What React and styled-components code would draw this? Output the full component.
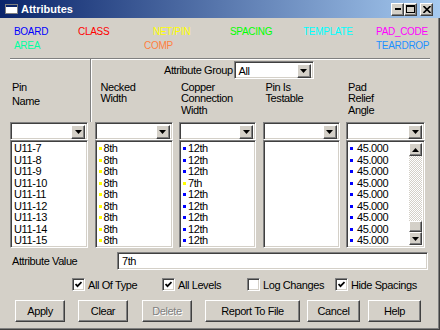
import React from 'react';
import styled, { createGlobalStyle, css } from 'styled-components';

const GlobalStyle = createGlobalStyle`
  html, body {
    margin: 0;
    padding: 0;
    background: #d4d0c8;
  }
  body {
    font-family: "Liberation Sans", Arial, sans-serif;
    font-size: 11px;
    letter-spacing: -0.4px;
    color: #000;
  }
  #root {
    width: 440px;
    height: 330px;
  }
`;

const sunken = css`
  box-sizing: border-box;
  border: 1px solid;
  border-color: #808080 #ffffff #ffffff #808080;
  box-shadow: inset 1px 1px 0 #404040, inset -1px -1px 0 #d4d0c8;
`;

const raised = css`
  box-sizing: border-box;
  border: 1px solid;
  border-color: #ffffff #404040 #404040 #ffffff;
  box-shadow: inset -1px -1px 0 #808080, inset 1px 1px 0 #d4d0c8;
  background: #d4d0c8;
`;

const Window = styled.div`
  width: 440px;
  height: 330px;
  box-sizing: border-box;
  background: #d4d0c8;
  display: flex;
  flex-direction: column;
  overflow: hidden;
  box-shadow: inset -1px -1px 0 #404040, inset -2px -2px 0 #808080;
`;

const TitleBar = styled.div`
  height: 18px;
  flex: none;
  display: flex;
  align-items: center;
  padding: 0 7px 0 5px;
  background: linear-gradient(to right, #0a246a, #a6caf0);
`;

const Title = styled.span`
  color: #fff;
  font-weight: bold;
  font-size: 11px;
  letter-spacing: 0;
  margin-left: 3px;
  flex: 1;
`;

const CapButton = styled.div`
  ${raised};
  width: 13px;
  height: 13px;
  display: flex;
  align-items: center;
  justify-content: center;
  margin-left: ${(p) => p.$ml || 0}px;
`;

const Body = styled.div`
  flex: 1;
  display: flex;
  flex-direction: column;
  padding: 0 10px;
`;

const Legend = styled.div`
  margin-top: 7px;
  padding-left: 4px;
  display: grid;
  grid-template-columns: 64px 75px 77px 73px 73px 1fr;
  grid-auto-rows: 14px;
  font-size: 10px;
  letter-spacing: -0.3px;
  line-height: 14px;
`;

const LegendItem = styled.span`
  color: ${(p) => p.$color};
  grid-column: ${(p) => p.$col || 'auto'};
  padding-left: ${(p) => p.$indent || 0}px;
  white-space: nowrap;
`;

const TopSection = styled.div`
  margin-top: 5px;
  height: 64px;
  box-sizing: border-box;
  display: flex;
  border-top: 1px solid #808080;
  box-shadow: inset 0 1px 0 #ffffff;
`;

const PinPane = styled.div`
  width: 81px;
  box-sizing: border-box;
  border-right: 1px solid #808080;
  padding: 21px 0 0 2px;
`;

const RightPane = styled.div`
  flex: 1;
  border-left: 1px solid #ffffff;
  display: flex;
  flex-direction: column;
`;

const HeaderText = styled.div`
  line-height: ${(p) => p.$lh || 11.5}px;
  padding-left: ${(p) => p.$pl || 0}px;
  white-space: nowrap;
`;

const GroupRow = styled.div`
  margin-top: 2px;
  height: 18px;
  padding-left: 72px;
  display: flex;
  align-items: center;
  gap: 1px;
`;

const HeaderGrid = styled.div`
  margin-top: 2.5px;
  padding-left: 2.5px;
  display: grid;
  grid-template-columns: 78px 77px 77px 79px;
  column-gap: 6.5px;
`;

const Grid = styled.div`
  display: grid;
  grid-template-columns: 78px 78px 77px 77px 79px;
  grid-template-rows: 18px 108px;
  column-gap: 6.5px;
`;

const ComboBox = styled.div`
  ${sunken};
  width: ${(p) => (p.$w ? `${p.$w}px` : 'auto')};
  height: 18px;
  background: #fff;
  display: flex;
  padding: 2px;
`;

const ComboText = styled.div`
  flex: 1;
  line-height: 14px;
  padding-left: 2px;
`;

const DropButton = styled.div`
  ${raised};
  width: 14px;
  height: 14px;
  display: flex;
  align-items: center;
  justify-content: center;
`;

const ListBox = styled.div`
  ${sunken};
  background: #fff;
  padding: 2px;
  display: flex;
  overflow: hidden;
`;

const Items = styled.div`
  flex: 1;
  overflow: hidden;
`;

const Item = styled.div`
  height: 11.5px;
  line-height: 11.5px;
  padding-left: 1px;
  display: flex;
  align-items: center;
  gap: ${(p) => p.$gap || 2}px;
  white-space: nowrap;
`;

const Bullet = styled.span`
  width: 3px;
  height: 3px;
  flex: none;
  background: ${(p) => p.$color};
`;

const ScrollBar = styled.div`
  width: 13px;
  flex: none;
  display: flex;
  flex-direction: column;
  background: repeating-conic-gradient(#d4d0c8 0 25%, #ffffff 0 50%) 0 0 / 2px 2px;
`;

const Track = styled.div`
  flex: 1;
`;

const ScrollButton = styled.div`
  ${raised};
  width: 13px;
  height: 13px;
  display: flex;
  align-items: center;
  justify-content: center;
`;

const Thumb = styled.div`
  ${raised};
  width: 13px;
  height: 11px;
`;

const ValueRow = styled.div`
  margin-top: 4px;
  padding-left: 2px;
  display: grid;
  grid-template-columns: 105px 311px;
  align-items: center;
`;

const TextField = styled.div`
  ${sunken};
  height: 18px;
  background: #fff;
  padding: 0 4px;
  line-height: 16px;
`;

const CheckRow = styled.div`
  margin-top: 8px;
  padding-left: 62px;
  display: flex;
  height: 13px;
`;

const CheckItem = styled.label`
  width: ${(p) => (p.$w ? `${p.$w}px` : 'auto')};
  display: flex;
  align-items: center;
  gap: 3px;
  white-space: nowrap;
`;

const Box = styled.span`
  ${sunken};
  width: 13px;
  height: 13px;
  background: #fff;
  display: flex;
  align-items: center;
  justify-content: center;
  flex: none;
`;

const ButtonRow = styled.div`
  margin-top: 9px;
  padding-left: 5px;
  display: flex;
`;

const Button = styled.div`
  ${raised};
  width: ${(p) => p.$w}px;
  height: 22px;
  margin-left: ${(p) => p.$ml || 0}px;
  display: flex;
  align-items: center;
  justify-content: center;
  color: ${(p) => (p.$disabled ? '#808080' : '#000')};
  text-shadow: ${(p) => (p.$disabled ? '1px 1px 0 #ffffff' : 'none')};
`;

const Arrow = ({ up }) => (
  <svg width="7" height="4" viewBox="0 0 7 4">
    <polygon points={up ? '0,4 7,4 3.5,0' : '0,0 7,0 3.5,4'} fill="#000" />
  </svg>
);

const Combo = ({ value, w }) => (
  <ComboBox $w={w}>
    <ComboText>{value}</ComboText>
    <DropButton>
      <Arrow />
    </DropButton>
  </ComboBox>
);

const Check = ({ checked, label, w }) => (
  <CheckItem $w={w}>
    <Box>
      {checked && (
        <svg width="7" height="7" viewBox="0 0 7 7">
          <path d="M0.5 3 L2.5 5.2 L6.5 1" stroke="#000" strokeWidth="1.8" fill="none" />
        </svg>
      )}
    </Box>
    {label}
  </CheckItem>
);

const AppIcon = () => (
  <svg width="13" height="10" viewBox="0 0 13 10">
    <rect x="0.5" y="0.5" width="12" height="9" fill="#fff" stroke="#808080" />
    <rect x="1" y="1" width="11" height="2" fill="#0a246a" />
  </svg>
);

const legend = [
  { text: 'BOARD', color: '#0000ff' },
  { text: 'CLASS', color: '#ff0000' },
  { text: 'NET/PIN', color: '#ffff00' },
  { text: 'SPACING', color: '#00ff00' },
  { text: 'TEMPLATE', color: '#00ffff' },
  { text: 'PAD_CODE', color: '#ff00ff' },
  { text: 'AREA', color: '#00ffa0', col: '1' },
  { text: 'COMP', color: '#ff8040', col: '2 / span 2', indent: 66 },
  { text: 'TEARDROP', color: '#1e90ff', col: '6' },
];

const pins = ['U11-7', 'U11-8', 'U11-9', 'U11-10', 'U11-11', 'U11-12', 'U11-13', 'U11-14', 'U11-15'];
const necked = pins.map(() => ({ v: '8th', c: '#ffff00' }));
const copper = ['12th', '12th', '12th', '7th', '12th', '12th', '12th', '12th', '12th'].map((v) => ({
  v,
  c: v === '7th' ? '#ffff00' : '#0000ff',
}));
const relief = pins.map(() => ({ v: '45.000', c: '#0000ff' }));

const BulletList = ({ rows, gap }) => (
  <Items>
    {rows.map((r, i) => (
      <Item key={i} $gap={gap}>
        <Bullet $color={r.c} />
        {r.v}
      </Item>
    ))}
  </Items>
);

export default function App() {
  return (
    <>
      <GlobalStyle />
      <Window>
        <TitleBar>
          <AppIcon />
          <Title>Attributes</Title>
          <CapButton>
            <svg width="6" height="2"><rect width="6" height="2" fill="#000" /></svg>
          </CapButton>
          <CapButton>
            <svg width="9" height="8" viewBox="0 0 9 8">
              <rect x="0.5" y="0.5" width="8" height="7" fill="none" stroke="#000" />
              <rect x="0" y="0" width="9" height="2" fill="#000" />
            </svg>
          </CapButton>
          <CapButton $ml={3}>
            <svg width="8" height="7" viewBox="0 0 8 7">
              <path d="M0.5 0 L7.5 7 M7.5 0 L0.5 7" stroke="#000" strokeWidth="1.6" />
            </svg>
          </CapButton>
        </TitleBar>
        <Body>
          <Legend>
            {legend.map((l) => (
              <LegendItem key={l.text} $color={l.color} $col={l.col} $indent={l.indent}>
                {l.text}
              </LegendItem>
            ))}
          </Legend>
          <TopSection>
            <PinPane>
              <HeaderText $lh={14}>
                Pin
                <br />
                Name
              </HeaderText>
            </PinPane>
            <RightPane>
              <GroupRow>
                <span>Attribute Group</span>
                <Combo value="All" w={80} />
              </GroupRow>
              <HeaderGrid>
                <HeaderText $pl={6}>Necked<br />Width</HeaderText>
                <HeaderText $pl={2}>Copper<br />Connection<br />Width</HeaderText>
                <HeaderText $pl={3}>Pin Is<br />Testable</HeaderText>
                <HeaderText $pl={2}>Pad<br />Relief<br />Angle</HeaderText>
              </HeaderGrid>
            </RightPane>
          </TopSection>
          <Grid>
            <Combo />
            <Combo />
            <Combo />
            <Combo />
            <Combo />
            <ListBox>
              <Items>
                {pins.map((p) => (
                  <Item key={p}>{p}</Item>
                ))}
              </Items>
            </ListBox>
            <ListBox>
              <BulletList rows={necked} />
            </ListBox>
            <ListBox>
              <BulletList rows={copper} />
            </ListBox>
            <ListBox />
            <ListBox>
              <BulletList rows={relief} gap={4} />
              <ScrollBar>
                <ScrollButton>
                  <Arrow up />
                </ScrollButton>
                <Track />
                <Thumb />
                <ScrollButton>
                  <Arrow />
                </ScrollButton>
              </ScrollBar>
            </ListBox>
          </Grid>
          <ValueRow>
            <span>Attribute Value</span>
            <TextField>7th</TextField>
          </ValueRow>
          <CheckRow>
            <Check checked label="All Of Type" w={90} />
            <Check checked label="All Levels" w={85} />
            <Check label="Log Changes" w={88} />
            <Check checked label="Hide Spacings" />
          </CheckRow>
          <ButtonRow>
            <Button $w={50}>Apply</Button>
            <Button $w={50} $ml={13}>Clear</Button>
            <Button $w={50} $ml={14} $disabled>Delete</Button>
            <Button $w={95} $ml={13}>Report To File</Button>
            <Button $w={53} $ml={7}>Cancel</Button>
            <Button $w={53} $ml={8}>Help</Button>
          </ButtonRow>
        </Body>
      </Window>
    </>
  );
}
